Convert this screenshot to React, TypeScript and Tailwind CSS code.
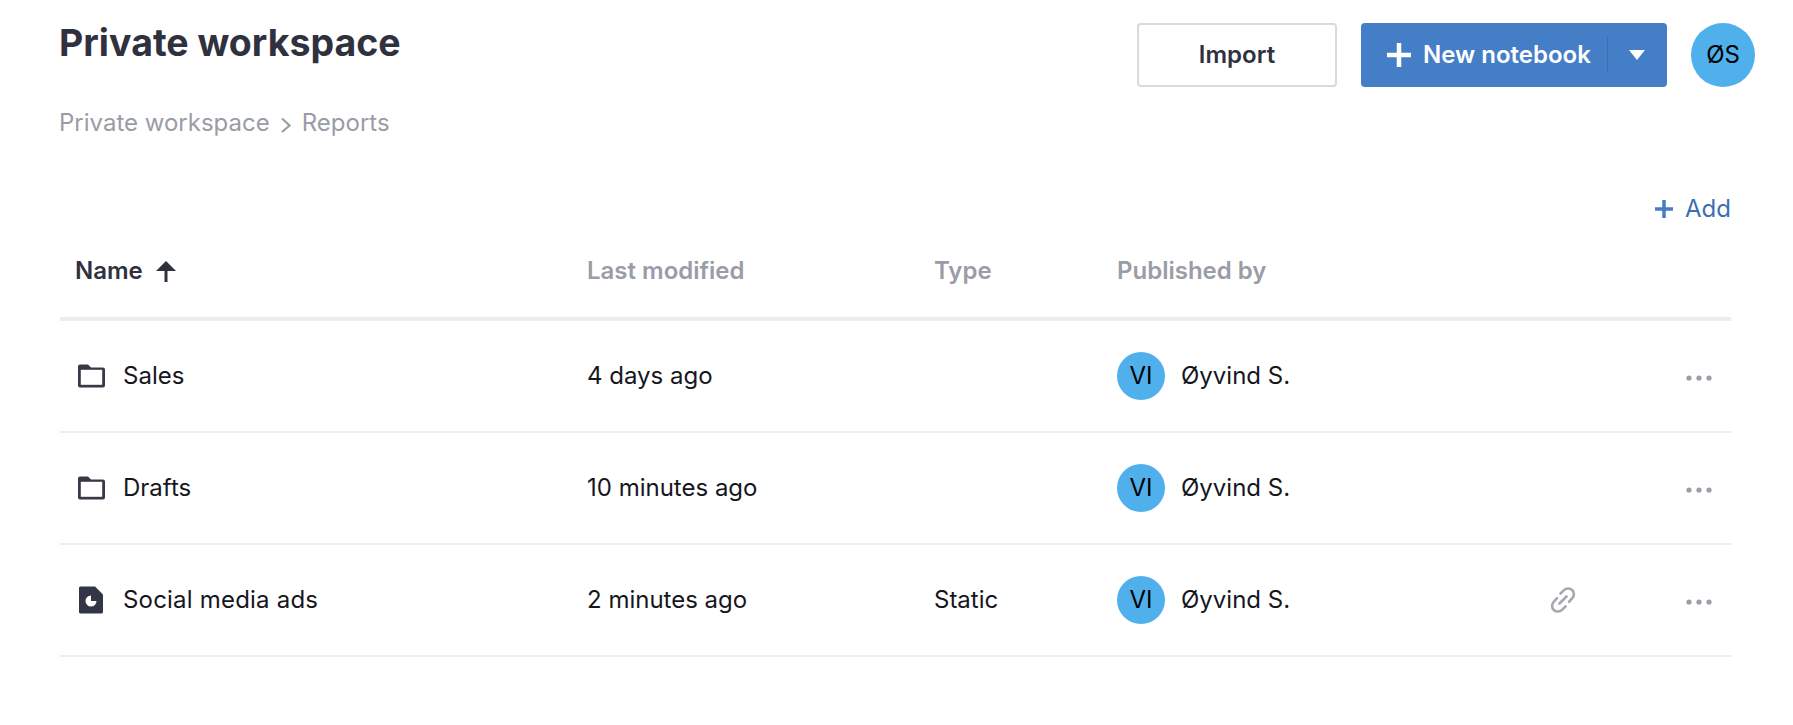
import React from "react";

const FolderIcon = () => (
  <svg width="27" height="24" viewBox="0 0 27 24" className="block">
    <path d="M0 2.500C0 1.400.9.500 2 .500h8l3 3h12c1.100 0 2 .9 2 2v16c0 1.100-.9 2-2 2H2c-1.100 0-2-.9-2-2V2.500Z" fill="#373a46" />
    <rect x="2.800" y="5.800" width="21.400" height="15" fill="#fff" />
  </svg>
);

const ReportIcon = () => (
  <svg width="26" height="28" viewBox="0 0 26 28" className="block">
    <path d="M1 2c0-.8.7-1.500 1.500-1.500H17L25 8.500V26c0 .8-.7 1.500-1.500 1.500h-21C1.700 27.500 1 26.800 1 26V2Z" fill="#333644" />
    <circle cx="13" cy="15" r="5.500" fill="#fff" />
    <path d="M13 15V9h6v6Z" fill="#333644" />
  </svg>
);

const Dots = () => (
  <svg width="26" height="6" viewBox="0 0 26 6" className="block">
    <circle cx="3" cy="3" r="2.600" fill="#9a9ca6" />
    <circle cx="13" cy="3" r="2.600" fill="#9a9ca6" />
    <circle cx="23" cy="3" r="2.600" fill="#9a9ca6" />
  </svg>
);

const LinkIcon = () => (
  <svg width="28" height="28" viewBox="0 0 28 28" fill="none" stroke="#a6a8b0" strokeWidth="2.600" strokeLinecap="round" className="block">
    <path d="M11.500 7.500 15 4.200a5.700 5.700 0 0 1 8.300 8L20 15.800" />
    <path d="M16.500 20.500 13 23.800a5.700 5.700 0 0 1-8.300-8L8 12.200" />
    <path d="M10.500 17.500 17.500 10.500" />
  </svg>
);

const rows = [
  { icon: <FolderIcon />, name: "Sales", modified: "4 days ago", type: "", link: false, nameClass: "" },
  { icon: <FolderIcon />, name: "Drafts", modified: "10 minutes ago", type: "", link: false, nameClass: "" },
  { icon: <ReportIcon />, name: "Social media ads", modified: "2 minutes ago", type: "Static", link: true, nameClass: "tracking-[0.2px]" },
];

export default function App() {
  return (
    <div className="h-[725px] w-[1793px] overflow-hidden bg-white pl-[60px] pr-[38px] font-['Inter',sans-serif] text-[#16171d]">
      <div className="flex items-start justify-between pt-[23px]">
        <div className="-ml-px">
          <h1 className="text-[37.500px] leading-[40px] font-bold text-[#2f323e]">Private workspace</h1>
          <div className="mt-[46px] flex items-center text-[24px] leading-[28px] text-[#9a9ca6]">
            <span>Private workspace</span>
            <svg width="14" height="18" viewBox="0 0 14 18" fill="none" stroke="#9a9ca6" strokeWidth="2.200" className="ml-[9px] mr-[9px] mt-[3px]">
              <path d="M3 2.500 10.500 9.500 3 16" />
            </svg>
            <span>Reports</span>
          </div>
        </div>
        <div className="flex items-center">
          <button className="flex h-[64px] w-[200px] items-center justify-center rounded-[4px] border-2 border-[#d9dade] bg-white text-[24px] font-semibold text-[#2f323e]">Import</button>
          <button className="ml-[24px] flex h-[64px] w-[306px] items-center rounded-[4px] bg-[#447ec7] pl-[26px] text-[24px] font-semibold text-white">
            <svg width="24" height="24" viewBox="0 0 24 24" fill="none" stroke="#fff" strokeWidth="4.500" className="shrink-0">
              <path d="M12 0v24M0 12h24" />
            </svg>
            <span className="ml-[12px]">New notebook</span>
            <span className="ml-[16px] h-[36px] w-px bg-[#3a6fb2]" />
            <svg width="16" height="10" viewBox="0 0 16 10" className="ml-[21px]"><path d="M0 0h16L8 10Z" fill="#fff" /></svg>
          </button>
          <div className="ml-[24px] flex h-[64px] w-[64px] items-center justify-center rounded-full bg-[#4fb0eb] text-[24px] text-black">ØS</div>
        </div>
      </div>
      <div className="mr-[24px]">
        <div className="mt-[58px] flex items-center justify-end gap-[12px] text-[24px] leading-[28px] text-[#3a6fb2]">
          <svg width="18" height="18" viewBox="0 0 18 18" fill="none" stroke="#447ec7" strokeWidth="3.500"><path d="M9 0v18M0 9h18" /></svg>
          <span>Add</span>
        </div>
        <div className="mt-[34px] flex h-[64px] items-start border-b-4 border-[#ececee] pl-[15px] text-[24px] leading-[28px] font-semibold text-[#9a9ca6]">
          <div className="flex w-[512px] items-center gap-[12px] text-[#2f323e]">
            <span>Name</span>
            <svg width="22" height="22" viewBox="0 0 22 22" fill="none" stroke="#2f323e" strokeWidth="3"><path d="M11 22V4" /><path d="M11 1 21 11H1Z" fill="#2f323e" stroke="none" /></svg>
          </div>
          <div className="w-[347px]">Last modified</div>
          <div className="w-[183px]">Type</div>
          <div>Published by</div>
        </div>
        {rows.map((r) => (
          <div key={r.name} className="flex h-[112px] items-center border-b-2 border-[#ececee] pl-[15px] text-[24px] text-[#16171d]">
            <div className="flex w-[512px] items-center">
              <div className="flex w-[32px] justify-center">{r.icon}</div>
              <span className={`ml-[16px] ${r.nameClass}`}>{r.name}</span>
            </div>
            <div className="w-[347px]">{r.modified}</div>
            <div className="w-[183px]">{r.type}</div>
            <div className="flex w-[432px] items-center">
              <div className="flex h-[48px] w-[48px] items-center justify-center rounded-full bg-[#4fb0eb] text-black">VI</div>
              <span className="ml-[16px]">Øyvind S.</span>
            </div>
            <div className="flex w-[28px] justify-center">{r.link ? <LinkIcon /> : null}</div>
            <div className="ml-auto mr-[19px] mt-[3px]"><Dots /></div>
          </div>
        ))}
      </div>
    </div>
  );
}
